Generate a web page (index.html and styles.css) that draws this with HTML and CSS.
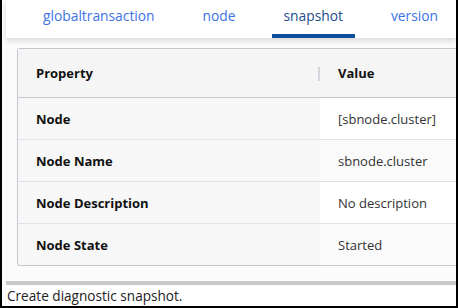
FILE: index.html
```html
<!DOCTYPE html>
<html lang="en">
<head>
  <meta charset="UTF-8">
  <title>Snapshot</title>
  <link rel="stylesheet" href="styles.css">
</head>
<body>
  <div class="frame">
    <!-- tab strip -->
    <div class="tabs">
      <a class="tab">globaltransaction</a>
      <a class="tab">node</a>
      <a class="tab active">snapshot</a>
      <a class="tab">version</a>
    </div>

    <div class="content">
      <table class="props">
        <thead>
          <tr>
            <th class="col-prop">Property</th>
            <th class="col-val">Value</th>
          </tr>
        </thead>
        <tbody>
          <tr>
            <td class="col-prop">Node</td>
            <td class="col-val">[sbnode.cluster]</td>
          </tr>
          <tr class="alt">
            <td class="col-prop">Node Name</td>
            <td class="col-val">sbnode.cluster</td>
          </tr>
          <tr>
            <td class="col-prop">Node Description</td>
            <td class="col-val">No description</td>
          </tr>
          <tr class="alt">
            <td class="col-prop">Node State</td>
            <td class="col-val">Started</td>
          </tr>
        </tbody>
      </table>
    </div>

    <div class="status">Create diagnostic snapshot.</div>
  </div>
</body>
</html>
```

FILE: styles.css
```css
body {
  margin: 0;
  font-family: "Open Sans", "Noto Sans", Arial, sans-serif;
  background: #fff;
}

.frame {
  width: 458px;
  height: 308px;
  box-sizing: border-box;
  border-left: 2px solid #000;
  border-right: 2px solid #000;
  border-bottom: 2px solid #000;
  display: flex;
  flex-direction: column;
  overflow: hidden;
  background: #fbfbfb;
}

.tabs {
  flex: none;
  height: 38px;
  margin-left: 4px;
  padding-left: 25px;
  background: #fff;
  box-shadow: 0 3px 5px rgba(0,0,0,0.13);
  display: flex;
  gap: 24px;
  position: relative;
  z-index: 1;
}

.tab {
  padding: 6px 12px 0;
  font-size: 13.8px;
  color: #3c72e6;
  box-sizing: border-box;
  height: 38px;
  white-space: nowrap;
  cursor: pointer;
}

.tab.active {
  color: #1b4c8c;
  border-bottom: 4px solid #0f4f9c;
}

.content {
  flex: 1;
  padding: 10px 0 0 15px;
  overflow: hidden;
}

.props {
  border-collapse: separate;
  border-spacing: 0;
  border: 1px solid #c3c7cf;
  border-right: none;
  border-radius: 3px 0 0 3px;
  font-size: 13px;
  width: 500px;
  background: #f7f7f8;
}

.props th,
.props td {
  text-align: left;
  padding: 0 0 0 18px;
  color: #222;
}

.props th {
  height: 48px;
  font-weight: 700;
  color: #111;
  background: #f5f5f6;
  border-bottom: 1px solid #c5c9d2;
}

.props th.col-prop {
  position: relative;
}

.props th.col-prop::after {
  content: "";
  position: absolute;
  right: 0;
  top: 18px;
  width: 2px;
  height: 14px;
  background: #d3d6dd;
}

.props td {
  height: 41px;
  border-bottom: 1px solid #dce1ea;
}

.props tbody tr:last-child td {
  border-bottom: none;
}

.props td.col-prop {
  font-weight: 700;
  color: #111;
}

.col-prop {
  width: 284px;
}

.props td.col-val {
  background: #fff;
  color: #333;
}

.props tr.alt td.col-val {
  background: #fafafa;
}

.status {
  flex: none;
  margin-left: 4px;
  border-top: 4px solid #c8c8c8;
  background: #fff;
  height: 21px;
  padding-left: 1px;
  font-size: 13.6px;
  line-height: 22px;
  color: #222;
}
```
